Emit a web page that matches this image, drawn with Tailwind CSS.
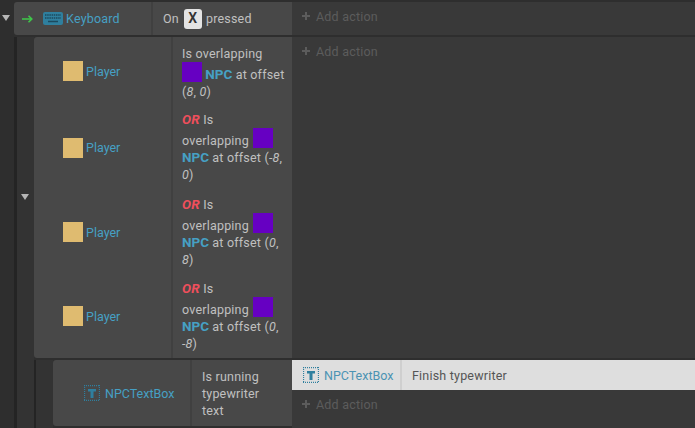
<!doctype html>
<html>
<head>
<meta charset="utf-8">
<script src="https://cdn.jsdelivr.net/npm/@tailwindcss/browser@4"></script>
</head>
<body class="w-[695px] h-[428px] overflow-hidden bg-[#393939] font-['Roboto',sans-serif] text-[12.5px] leading-[17px] tracking-[.2px] text-[#c0c0c0]">
  <div class="flex h-[428px] bg-[#2e2e2e] pt-[2px]">
    <!-- outer toggle -->
    <div class="w-[14px] pt-[13px] pr-[3px] flex justify-center shrink-0">
      <div class="w-0 h-0 border-x-[4px] border-x-transparent border-t-[6px] border-t-[#b5b5b5]"></div>
    </div>
    <div class="flex-1 flex flex-col min-w-0">
      <!-- keyboard event -->
      <div class="flex h-[33px]">
        <div class="w-[278px] flex bg-[#484848] rounded-l-[3px]">
          <div class="w-[139px] flex items-center pl-[8px] border-r-2 border-r-[#404040]">
            <svg class="w-[11px] h-[8px] text-[#3fc64a] mr-[10px]" viewBox="0 0 11 8" fill="none" stroke="currentColor" stroke-width="1.6"><path d="M0 4h9.500M6.500 .8 9.800 4 6.500 7.200"/></svg>
            <svg class="w-[20px] h-[13px] mr-[3px]" viewBox="0 0 20 13"><rect width="20" height="13" rx="2" fill="#2f7f9e"/><path d="M2 3h16M2 6h16" stroke="#1c4a5e" stroke-width="1.500" stroke-dasharray="1.500 .7"/><path d="M5 9.500h10" stroke="#1c4a5e" stroke-width="1.500"/></svg>
            <span class="text-[#46a0c4]">Keyboard</span>
          </div>
          <div class="flex-1 flex items-center pl-[10px]">
            <span>On</span>
            <span class="w-[18px] h-[20px] ml-[5px] mr-[4px] rounded-[3px] bg-[#e4e4e4] text-[#333] font-semibold text-[14px] flex items-center justify-center">X</span>
            <span>pressed</span>
          </div>
        </div>
        <div class="flex-1 bg-[#393939] pl-[10px] pt-[6px] text-[#5c5c5c] flex items-start">
          <svg class="w-[8px] h-[8px] mt-[4px] mr-[6px]" viewBox="0 0 8 8"><path d="M0 4h8M4 0v8" stroke="#5c5c5c" stroke-width="2"/></svg>
          <span>Add action</span>
        </div>
      </div>
      <div class="h-[2px]"></div>
      <!-- sub event -->
      <div class="flex-1 flex min-h-0">
        <div class="w-[20px] shrink-0 flex">
          <div class="w-[3px] bg-[#242424]"></div>
          <div class="flex-1 bg-[#333] flex items-center justify-center pb-[72px] pr-[2px]">
            <div class="w-0 h-0 border-x-[4px] border-x-transparent border-t-[6px] border-t-[#b5b5b5]"></div>
          </div>
        </div>
        <div class="flex-1 flex flex-col min-w-0">
          <div class="flex h-[321px]">
            <div class="w-[258px] bg-[#484848] rounded-l-[3px]">
              <div class="flex h-[68px]">
                <div class="w-[139px] flex items-center pl-[29px] border-r-2 border-r-[#404040]"><span class="w-[20px] h-[20px] bg-[#dfbb70] mr-[3px]"></span><span class="text-[#46a0c4] tracking-normal">Player</span></div>
                <div class="flex-1 pl-[9px] pt-[8px]">Is overlapping<br><span class="inline-block align-[-3px] w-[20px] h-[20px] bg-[#6600c2]"></span> <b class="text-[#46a0c4] font-bold text-[13.5px] tracking-normal">NPC</b> at offset<br>(<i>8</i>, <i>0</i>)</div>
              </div>
              <div class="flex h-[85px]">
                <div class="w-[139px] flex items-center pl-[29px] border-r-2 border-r-[#404040]"><span class="w-[20px] h-[20px] bg-[#dfbb70] mr-[3px]"></span><span class="text-[#46a0c4] tracking-normal">Player</span></div>
                <div class="flex-1 pl-[9px] pt-[6px]"><b class="italic text-[#ef4f5c] text-[13.5px]">OR</b> Is<br>overlapping <span class="inline-block align-[-3px] w-[20px] h-[20px] ml-[1px] bg-[#6600c2]"></span><br><b class="text-[#46a0c4] font-bold text-[13.5px] tracking-normal">NPC</b> at offset (<i>-8</i>,<br><i>0</i>)</div>
              </div>
              <div class="flex h-[84px]">
                <div class="w-[139px] flex items-center pl-[29px] border-r-2 border-r-[#404040]"><span class="w-[20px] h-[20px] bg-[#dfbb70] mr-[3px]"></span><span class="text-[#46a0c4] tracking-normal">Player</span></div>
                <div class="flex-1 pl-[9px] pt-[6px]"><b class="italic text-[#ef4f5c] text-[13.5px]">OR</b> Is<br>overlapping <span class="inline-block align-[-3px] w-[20px] h-[20px] ml-[1px] bg-[#6600c2]"></span><br><b class="text-[#46a0c4] font-bold text-[13.5px] tracking-normal">NPC</b> at offset (<i>0</i>,<br><i>8</i>)</div>
              </div>
              <div class="flex h-[84px]">
                <div class="w-[139px] flex items-center pl-[29px] border-r-2 border-r-[#404040]"><span class="w-[20px] h-[20px] bg-[#dfbb70] mr-[3px]"></span><span class="text-[#46a0c4] tracking-normal">Player</span></div>
                <div class="flex-1 pl-[9px] pt-[6px]"><b class="italic text-[#ef4f5c] text-[13.5px]">OR</b> Is<br>overlapping <span class="inline-block align-[-3px] w-[20px] h-[20px] ml-[1px] bg-[#6600c2]"></span><br><b class="text-[#46a0c4] font-bold text-[13.5px] tracking-normal">NPC</b> at offset (<i>0</i>,<br><i>-8</i>)</div>
              </div>
            </div>
            <div class="flex-1 bg-[#393939] pl-[10px] pt-[6px] text-[#5c5c5c] flex items-start">
              <svg class="w-[8px] h-[8px] mt-[4px] mr-[6px]" viewBox="0 0 8 8"><path d="M0 4h8M4 0v8" stroke="#5c5c5c" stroke-width="2"/></svg>
              <span>Add action</span>
            </div>
          </div>
          <div class="h-[2px]"></div>
          <!-- sub sub event -->
          <div class="flex flex-1 min-h-0">
            <div class="w-[19px] shrink-0 flex"><div class="w-[2px] bg-[#242424]"></div><div class="flex-1 bg-[#333]"></div></div>
            <div class="w-[239px] h-[66px] flex bg-[#484848] rounded-l-[3px]">
              <div class="w-[139px] flex items-center pl-[31px] border-r-2 border-r-[#404040]">
                <svg class="w-[16px] h-[16px] mr-[5px]" viewBox="0 0 16 16" fill="none"><path d="M0 .5H16M0 15.500H16M.5 0V16M15.500 0V16" stroke="#2f7f9e" stroke-width="1.300" stroke-dasharray="1 1"/><path d="M4 4h8v2.500H9.500V13h-3V6.500H4z" fill="#2f7f9e"/></svg>
                <span class="text-[#46a0c4] whitespace-nowrap tracking-normal">NPCTextBox</span>
              </div>
              <div class="flex-1 pl-[10px] pr-[22px] pt-[8px]">Is running typewriter text</div>
            </div>
            <div class="flex-1 bg-[#393939]">
              <div class="h-[30px] bg-[#dedede] flex items-center text-[#555]">
                <div class="h-full flex items-center pl-[11px] border-r-2 border-r-[#cfcfcf] w-[110px]">
                  <svg class="w-[16px] h-[16px] mr-[5px] shrink-0" viewBox="0 0 16 16" fill="none"><path d="M0 .5H16M0 15.500H16M.5 0V16M15.500 0V16" stroke="#2f7f9e" stroke-width="1.300" stroke-dasharray="1 1"/><path d="M4 4h8v2.500H9.500V13h-3V6.500H4z" fill="#2f7f9e"/></svg>
                  <span class="text-[#4b93b3] whitespace-nowrap tracking-normal">NPCTextBox</span>
                </div>
                <span class="pl-[10px]">Finish typewriter</span>
              </div>
              <div class="pl-[10px] pt-[6px] text-[#5c5c5c] flex items-start">
                <svg class="w-[8px] h-[8px] mt-[4px] mr-[6px]" viewBox="0 0 8 8"><path d="M0 4h8M4 0v8" stroke="#5c5c5c" stroke-width="2"/></svg>
                <span>Add action</span>
              </div>
            </div>
          </div>
        </div>
      </div>
    </div>
  </div>
</body>
</html>
